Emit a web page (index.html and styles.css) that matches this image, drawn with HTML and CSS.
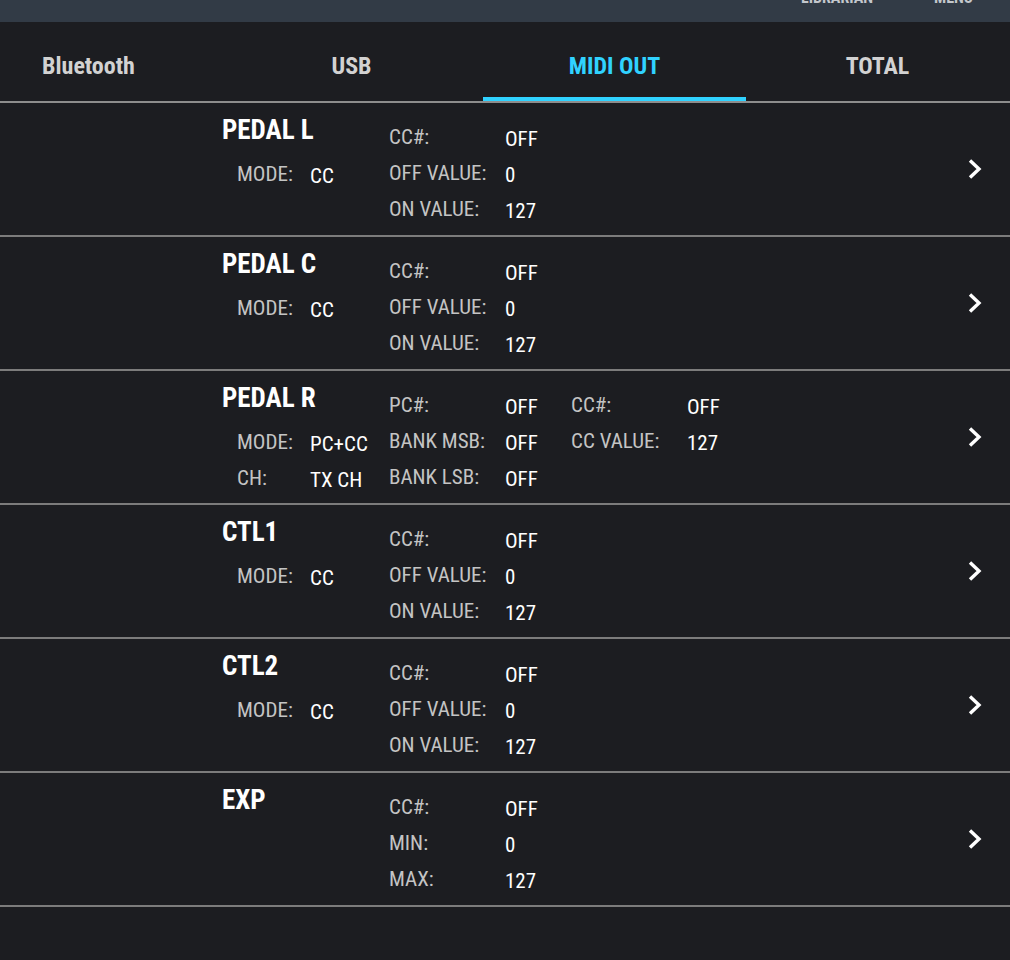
FILE: index.html
```html
<!DOCTYPE html>
<html>
<head>
	<meta charset="utf-8">
	<title>MIDI OUT</title>
	<link rel="stylesheet" href="styles.css">
</head>
<body>
	<div class="topbar">
		<span class="topbtn">LIBRARIAN</span>
		<span class="topbtn">MENU</span>
	</div>
	<div class="tabs">
		<div class="tabrow">
			<div class="tab">Bluetooth</div>
			<div class="tab">USB</div>
			<div class="tab cur">MIDI OUT</div>
			<div class="tab">TOTAL</div>
		</div>
	</div>
	<ul class="list">
		<li class="item">
			<div class="fields">
				<div class="head">
					<div class="name">PEDAL L</div>
					<div class="pair"><span class="k">MODE:</span><span class="v">CC</span></div>
				</div>
				<div class="col">
					<div class="pair"><span class="k">CC#:</span><span class="v">OFF</span></div>
					<div class="pair"><span class="k">OFF VALUE:</span><span class="v">0</span></div>
					<div class="pair"><span class="k">ON VALUE:</span><span class="v">127</span></div>
				</div>
			</div>
			<svg class="arrow" width="18" height="24" viewBox="0 0 18 24"><path d="M4 3.5 L13 12 L4 20.5" fill="none" stroke="#fff" stroke-width="3.4"/></svg>
		</li>
		<li class="item">
			<div class="fields">
				<div class="head">
					<div class="name">PEDAL C</div>
					<div class="pair"><span class="k">MODE:</span><span class="v">CC</span></div>
				</div>
				<div class="col">
					<div class="pair"><span class="k">CC#:</span><span class="v">OFF</span></div>
					<div class="pair"><span class="k">OFF VALUE:</span><span class="v">0</span></div>
					<div class="pair"><span class="k">ON VALUE:</span><span class="v">127</span></div>
				</div>
			</div>
			<svg class="arrow" width="18" height="24" viewBox="0 0 18 24"><path d="M4 3.5 L13 12 L4 20.5" fill="none" stroke="#fff" stroke-width="3.4"/></svg>
		</li>
		<li class="item">
			<div class="fields">
				<div class="head">
					<div class="name">PEDAL R</div>
					<div class="pair"><span class="k">MODE:</span><span class="v">PC+CC</span></div>
					<div class="pair"><span class="k">CH:</span><span class="v">TX CH</span></div>
				</div>
				<div class="col">
					<div class="pair"><span class="k">PC#:</span><span class="v">OFF</span></div>
					<div class="pair"><span class="k">BANK MSB:</span><span class="v">OFF</span></div>
					<div class="pair"><span class="k">BANK LSB:</span><span class="v">OFF</span></div>
				</div>
				<div class="col">
					<div class="pair"><span class="k">CC#:</span><span class="v">OFF</span></div>
					<div class="pair"><span class="k">CC VALUE:</span><span class="v">127</span></div>
				</div>
			</div>
			<svg class="arrow" width="18" height="24" viewBox="0 0 18 24"><path d="M4 3.5 L13 12 L4 20.5" fill="none" stroke="#fff" stroke-width="3.4"/></svg>
		</li>
		<li class="item">
			<div class="fields">
				<div class="head">
					<div class="name">CTL1</div>
					<div class="pair"><span class="k">MODE:</span><span class="v">CC</span></div>
				</div>
				<div class="col">
					<div class="pair"><span class="k">CC#:</span><span class="v">OFF</span></div>
					<div class="pair"><span class="k">OFF VALUE:</span><span class="v">0</span></div>
					<div class="pair"><span class="k">ON VALUE:</span><span class="v">127</span></div>
				</div>
			</div>
			<svg class="arrow" width="18" height="24" viewBox="0 0 18 24"><path d="M4 3.5 L13 12 L4 20.5" fill="none" stroke="#fff" stroke-width="3.4"/></svg>
		</li>
		<li class="item">
			<div class="fields">
				<div class="head">
					<div class="name">CTL2</div>
					<div class="pair"><span class="k">MODE:</span><span class="v">CC</span></div>
				</div>
				<div class="col">
					<div class="pair"><span class="k">CC#:</span><span class="v">OFF</span></div>
					<div class="pair"><span class="k">OFF VALUE:</span><span class="v">0</span></div>
					<div class="pair"><span class="k">ON VALUE:</span><span class="v">127</span></div>
				</div>
			</div>
			<svg class="arrow" width="18" height="24" viewBox="0 0 18 24"><path d="M4 3.5 L13 12 L4 20.5" fill="none" stroke="#fff" stroke-width="3.4"/></svg>
		</li>
		<li class="item">
			<div class="fields">
				<div class="head">
					<div class="name">EXP</div>
				</div>
				<div class="col">
					<div class="pair"><span class="k">CC#:</span><span class="v">OFF</span></div>
					<div class="pair"><span class="k">MIN:</span><span class="v">0</span></div>
					<div class="pair"><span class="k">MAX:</span><span class="v">127</span></div>
				</div>
			</div>
			<svg class="arrow" width="18" height="24" viewBox="0 0 18 24"><path d="M4 3.5 L13 12 L4 20.5" fill="none" stroke="#fff" stroke-width="3.4"/></svg>
		</li>
	</ul>
</body>
</html>
```
FILE: styles.css
```css
body{
	margin: 0;
	background-color: #1c1d21;
	font-family: "Roboto Condensed", Roboto, sans-serif;
	color: #fff;
}
ul{
	list-style: none;
	margin: 0;
	padding: 0;
}
.topbar{
	display: flex;
	justify-content: flex-end;
	height: 22px;
	padding-right: 37px;
	overflow: hidden;
	background-color: #323b46;
}
.topbar .topbtn{
	margin-top: -12px;
	margin-left: 61px;
	line-height: 20px;
	font-size: 16px;
	font-weight: bold;
	color: #c3c7cc;
}
.tabs{
	overflow: hidden;
	border-bottom: 2px solid #8d8d8d;
}
.tabs .tabrow{
	display: flex;
	margin-left: -43px;
}
.tabs .tab{
	flex: 0 0 263px;
	height: 81px;
	margin-bottom: -2px;
	padding-top: 32px;
	box-sizing: border-box;
	line-height: 24px;
	font-size: 24px;
	font-weight: bold;
	text-align: center;
	color: #d2d2d2;
}
.tabs .cur{
	color: #30d2ff;
	box-shadow: inset 0 -6px #30d2ff;
}
.list .item{
	display: flex;
	align-items: center;
	height: 132px;
	border-bottom: 2px solid #7c7c7c;
}
.item .fields{
	display: flex;
	align-self: flex-start;
	padding: 16px 0 0 222px;
}
.item .head{
	width: 167px;
}
.item .name{
	height: 22px;
	margin-bottom: 15px;
	line-height: 22px;
	font-size: 27px;
	font-weight: bold;
}
.item .head .pair{
	padding-left: 15px;
}
.item .head .k{
	width: 73px;
}
.item .col{
	width: 182px;
}
.item .pair{
	display: flex;
	align-items: center;
	height: 36px;
	font-size: 21px;
}
.pair .k{
	flex: none;
	width: 116px;
	color: #c4c4c4;
}
.pair .v{
	padding-top: 3px;
	color: #fff;
}
.item .arrow{
	margin-left: auto;
	margin-right: 26px;
}
```
